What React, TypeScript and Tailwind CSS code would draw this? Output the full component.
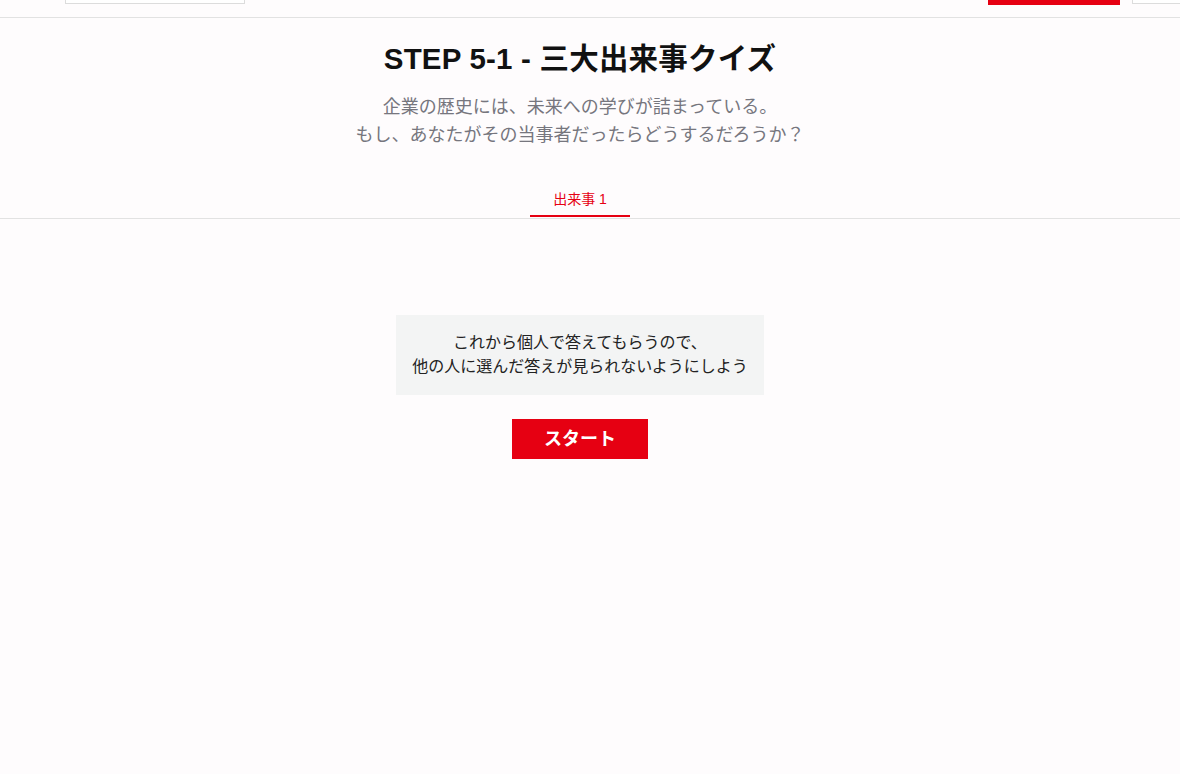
import React from "react";

export default function App() {
  return (
    <div
      className="min-h-[774px] w-full bg-[#fefcfd] text-[#111]"
      style={{ fontFamily: '"Liberation Sans", "Noto Sans CJK JP", sans-serif' }}
    >
      {/* header (scrolled, only bottom edge visible) */}
      <header className="relative flex h-[18px] items-start border-b border-[#e2e2e2] bg-[#fefcfd]">
        <div className="ml-[65px] h-[4px] w-[180px] border-x border-b border-[#dcdcdc] bg-white" />
        <div className="ml-auto h-[5px] w-[132px] bg-[#e60012]" />
        <div className="ml-[12px] h-[4px] w-[48px] border-l border-b border-[#dcdcdc] bg-white" />
      </header>

      <main className="flex flex-col items-center">
        <h1 className="mr-[20px] mt-[21px] text-[29.5px] font-bold leading-[40px] tracking-[0.2px] text-[#111]">
          STEP 5-1 - 三大出来事クイズ
        </h1>
        <p className="mr-[20px] mt-[14px] text-center text-[18px] leading-[28px] text-[#76767e]">
          企業の歴史には、未来への学びが詰まっている。
          <br />
          もし、あなたがその当事者だったらどうするだろうか？
        </p>

        <div className="mt-[40px] flex w-full justify-center border-b border-[#e2e2e2] pr-[20px]">
          <div className="mb-px w-[100px] border-b-2 border-[#e60012] pb-[6px] text-center text-[14px] leading-5 text-[#e60012]">
            出来事 1
          </div>
        </div>

        <div className="mr-[20px] mt-[96px] bg-[#f3f4f4] px-4 py-4 text-center text-[16px] leading-6 text-[#222]">
          これから個人で答えてもらうので、
          <br />
          他の人に選んだ答えが見られないようにしよう
        </div>

        <button className="mr-[20px] mt-6 h-10 w-[136px] bg-[#e60012] text-[18px] font-bold text-white">
          スタート
        </button>
      </main>
    </div>
  );
}
